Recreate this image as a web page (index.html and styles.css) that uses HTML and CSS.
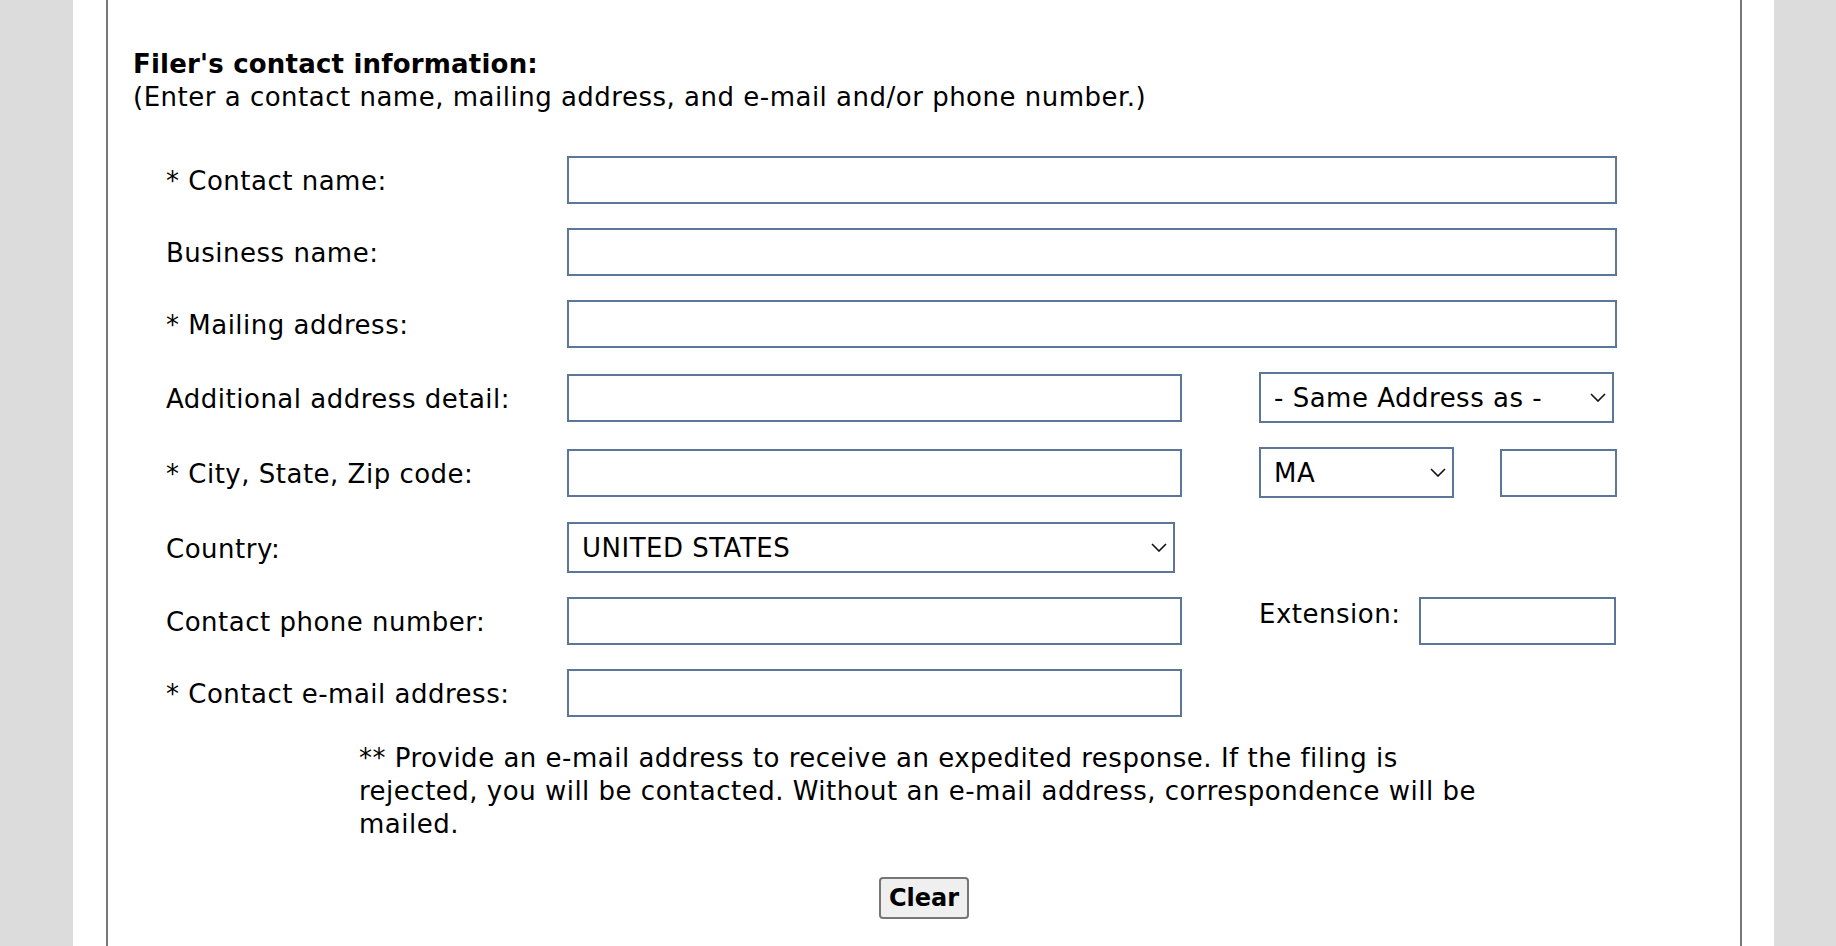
FILE: index.html
```html
<!DOCTYPE html>
<html lang="en">
<head>
<meta charset="utf-8">
<title>Filer's contact information</title>
<link rel="stylesheet" href="styles.css">
</head>
<body>
<div class="page">
  <div class="box">
    <div class="intro">
      <div class="title">Filer's contact information:</div>
      <div class="sub">(Enter a contact name, mailing address, and e-mail and/or phone number.)</div>
    </div>
    <form class="form">
      <div class="row">
        <label class="lbl">* Contact name:</label>
        <input class="in full" type="text">
      </div>
      <div class="row">
        <label class="lbl">Business name:</label>
        <input class="in full" type="text">
      </div>
      <div class="row">
        <label class="lbl">* Mailing address:</label>
        <input class="in full" type="text">
      </div>
      <div class="row">
        <label class="lbl">Additional address detail:</label>
        <input class="in half" type="text">
        <div class="sel same">
          <select><option>- Same Address as -</option></select>
          <svg class="chev" viewBox="0 0 16 9" width="16" height="9"><path d="M1 1 L8 8 L15 1" fill="none" stroke="#111" stroke-width="1.6"/></svg>
        </div>
      </div>
      <div class="row">
        <label class="lbl">* City, State, Zip code:</label>
        <input class="in half" type="text">
        <div class="sel state">
          <select><option>MA</option></select>
          <svg class="chev" viewBox="0 0 16 9" width="16" height="9"><path d="M1 1 L8 8 L15 1" fill="none" stroke="#111" stroke-width="1.6"/></svg>
        </div>
        <input class="in zip" type="text">
      </div>
      <div class="row">
        <label class="lbl">Country:</label>
        <div class="sel country">
          <select><option>UNITED STATES</option></select>
          <svg class="chev" viewBox="0 0 16 9" width="16" height="9"><path d="M1 1 L8 8 L15 1" fill="none" stroke="#111" stroke-width="1.6"/></svg>
        </div>
      </div>
      <div class="row">
        <label class="lbl">Contact phone number:</label>
        <input class="in half" type="text">
        <label class="ext-lbl">Extension:</label>
        <input class="in ext" type="text">
      </div>
      <div class="row">
        <label class="lbl">* Contact e-mail address:</label>
        <input class="in half" type="text">
      </div>
      <p class="note">** Provide an e-mail address to receive an expedited response. If the filing is rejected, you will be contacted. Without an e-mail address, correspondence will be mailed.</p>
      <div class="actions">
        <button type="button" class="btn">Clear</button>
      </div>
    </form>
  </div>
</div>
</body>
</html>
```
FILE: styles.css
```css
html, body {
  margin: 0;
  padding: 0;
}
body {
  background: #dcdcdc;
  font-family: "DejaVu Sans", Verdana, sans-serif;
  font-size: 26px;
  letter-spacing: 0.5px;
  color: #000;
  overflow: hidden;
}
.page {
  margin: 0 62px 0 73px;
  background: #fff;
  padding: 0 32px 0 33px;
  height: 946px;
  box-sizing: border-box;
  overflow: hidden;
}
.box {
  border-left: 2px solid #777;
  border-right: 2px solid #777;
  height: 946px;
  box-sizing: border-box;
  padding-top: 48px;
}
.intro {
  padding-left: 25px;
  line-height: 33px;
}
.title {
  font-weight: bold;
  letter-spacing: 0.2px;
}
.form {
  margin-top: 30px;
  padding-left: 58px;
}
.row {
  display: flex;
  align-items: center;
  padding: 12px 0;
}
.lbl {
  width: 401px;
  flex: none;
  line-height: 32px;
  padding-top: 2px;
}
.in {
  box-sizing: border-box;
  height: 48px;
  border: 2px solid #5b7699;
  border-radius: 0;
  background: #fff;
  font: inherit;
  padding: 0 12px;
  margin: 0;
  flex: none;
}
.full { width: 1050px; }
.half { width: 615px; }
.zip { width: 117px; margin-left: 46px; }
.ext { width: 197px; }
.sel {
  position: relative;
  flex: none;
  height: 51px;
}
.sel select {
  appearance: none;
  -webkit-appearance: none;
  box-sizing: border-box;
  width: 100%;
  height: 51px;
  border: 2px solid #5b7699;
  border-radius: 0;
  background: #fff;
  font: inherit;
  letter-spacing: 0.5px;
  color: #000;
  padding: 0 40px 0 13px;
  margin: 0;
}
.chev {
  position: absolute;
  right: 8px;
  top: 21px;
}
.same { width: 355px; margin-left: 77px; }
.state { width: 195px; margin-left: 77px; }
.country { width: 608px; }
.ext-lbl {
  width: 160px;
  margin-left: 77px;
  flex: none;
  align-self: flex-start;
  line-height: 32px;
  margin-top: 1px;
}
.note {
  width: 1125px;
  margin: 13px 0 0 193px;
  line-height: 33px;
}
.actions {
  display: flex;
  justify-content: center;
  margin: 36px 0 0 -58px;
}
.btn {
  font: inherit;
  font-weight: bold;
  font-size: 24px;
  letter-spacing: 0;
  height: 42px;
  padding: 0 8px;
  background: #efefef;
  border: 2px solid #767676;
  border-radius: 4px;
  color: #000;
}
```
